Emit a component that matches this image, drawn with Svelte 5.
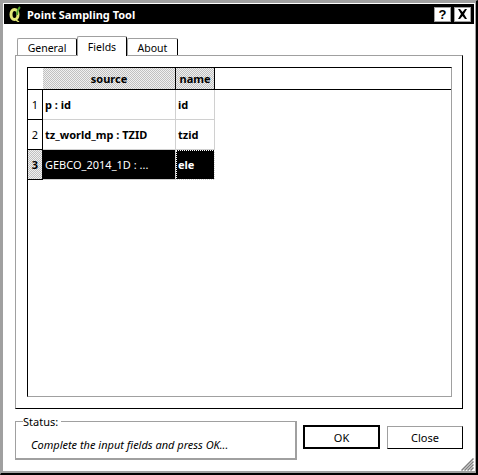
<script>
  const rows = [
    { n: '1', source: 'p : id', name: 'id' },
    { n: '2', source: 'tz_world_mp : TZID', name: 'tzid' },
    { n: '3', source: 'GEBCO_2014_1D : ...', name: 'ele', current: true }
  ];
</script>

<div class="window">
  <div class="titlebar">
    <svg class="logo" width="14" height="16" viewBox="0 0 14 16">
      <ellipse cx="5.500" cy="8.500" rx="3.500" ry="5" fill="none" stroke="#e4e878" stroke-width="3"/>
      <path d="M7 14l3 2" stroke="#e4e878" stroke-width="1.500"/>
      <path d="M8 9C8 5 9 3 11 1" stroke="#50a030" stroke-width="1.800" fill="none"/>
    </svg>
    <span class="title">Point Sampling Tool</span>
    <span class="tb-btn">?</span>
    <span class="tb-btn close">
      <svg width="11" height="10" viewBox="0 0 11 10"><path d="M1 0h2l2.500 3 2.500-3h2L7 5l3 5H8L5.500 7 3 10H1l3-5z" fill="#000"/></svg>
    </span>
  </div>
  <div class="body">
    <div class="tabs">
      <div class="tab general">General</div>
      <div class="tab active fields">Fields</div>
      <div class="tab about">About</div>
    </div>
    <div class="pane">
      <div class="table">
        <div class="row head">
          <div class="corner"></div>
          <div class="hcell source">source</div>
          <div class="hcell name">name</div>
        </div>
        {#each rows as r}
          <div class="row" class:current={r.current}>
            <div class="rowhead">{r.n}</div>
            <div class="cell source">{r.source}</div>
            <div class="cell name">{r.name}</div>
          </div>
        {/each}
      </div>
    </div>
    <div class="footer">
      <fieldset class="status">
        <legend>Status:</legend>
        <div class="msg">Complete the input fields and press OK...</div>
      </fieldset>
      <button class="btn ok">OK</button>
      <button class="btn">Close</button>
    </div>
  </div>
  <svg class="grip" width="13" height="13" viewBox="0 0 13 13">
    <path d="M12.500 .5L.5 12.500M12.500 3.500L3.500 12.500M12.500 6.500L6.500 12.500M12.500 9.500L9.500 12.500" stroke="#808080" stroke-width="1.500"/>
  </svg>
</div>

<style>
  :global(body) { margin: 0; background: #fff; }
  .window {
    position: relative;
    box-sizing: border-box;
    width: 478px;
    height: 475px;
    background: #fff;
    border-style: solid;
    border-width: 1px 2px 2px 1px;
    border-color: #a0a0a0 #000 #000 #a0a0a0;
    box-shadow: inset 2px 2px 0 #a0a0a0, inset -1px -2px 0 #a0a0a0;
    padding: 3px 2px 0 3px;
    font: 11px "Noto Sans", sans-serif;
    color: #000;
  }
  .titlebar {
    display: flex;
    align-items: center;
    height: 20px;
    background: #000;
    color: #fff;
    padding: 0 3px 0 5px;
    gap: 3px;
  }
  .logo { flex: none; }
  .title { flex: 1; font-weight: 700; font-size: 11px; margin-left: 1px; }
  .tb-btn {
    display: flex;
    align-items: center;
    justify-content: center;
    box-sizing: border-box;
    width: 17px;
    height: 15px;
    background: #fff;
    border: 1px solid #a0a0a0;
    font: 700 13px "Liberation Sans", sans-serif;
    color: #000;
  }
  .body { padding: 14px 11px 0 11px; }
  .tabs { display: flex; height: 17px; padding-left: 2px; font-size: 10.5px; }
  .tab {
    box-sizing: border-box;
    height: 17px;
    padding: 2px 0 0;
    border: 1px solid #a0a0a0;
    border-bottom: none;
    border-right: 1px solid #000;
    border-radius: 2px 2px 0 0;
    line-height: 14px;
    text-align: center;
  }
  .general { width: 60px; }
  .fields { width: 50px; }
  .about { width: 51px; }
  .tab.active {
    height: 20px;
    margin-top: -2px;
    padding-top: 3px;
    position: relative;
    z-index: 1;
    background: #fff;
  }
  .pane {
    box-sizing: border-box;
    height: 354px;
    border: 1px solid #a0a0a0;
    border-right-color: #000;
    border-bottom-color: #000;
    padding: 11px 10px 11px 11px;
  }
  .table {
    box-sizing: border-box;
    height: 100%;
    border: 1px solid #a0a0a0;
    border-top-color: #000;
    border-left-color: #000;
  }
  .row { display: flex; height: 30px; }
  .row.head { height: 21px; border-bottom: 1px solid #000; }
  .corner { width: 15px; }
  .hcell {
    display: flex;
    align-items: center;
    justify-content: center;
    box-sizing: border-box;
    font-weight: 700;
    border-right: 1px solid #000;
    background: repeating-conic-gradient(#c0c0c0 0 25%, #f0f0f0 0 50%) 0 0 / 2px 2px;
  }
  .source { width: 133px; flex: none; box-sizing: border-box; }
  .name { width: 39px; flex: none; box-sizing: border-box; }
  .rowhead {
    box-sizing: border-box;
    width: 15px;
    display: flex;
    align-items: center;
    justify-content: center;
    border-right: 1px solid #000;
    border-bottom: 1px solid #000;
  }
  .cell {
    display: flex;
    align-items: center;
    padding-left: 2px;
    border-right: 1px solid #d0d0d0;
    border-bottom: 1px solid #d0d0d0;
    font-weight: 700;
  }
  .current .rowhead {
    font-weight: 700;
    background: repeating-conic-gradient(#c0c0c0 0 25%, #f0f0f0 0 50%) 0 0 / 2px 2px;
  }
  .current .cell { background: #000; color: #fff; }
  .current .cell.source { font-weight: 400; }
  .current .cell.name { outline: 1px dotted #fff; outline-offset: -1px; }
  .footer { display: flex; align-items: flex-start; margin-top: 6px; }
  .status {
    box-sizing: border-box;
    width: 282px;
    height: 45px;
    margin: 0;
    padding: 0 0 0 15px;
    border: 1px solid #a0a0a0;
    border-bottom-width: 2px;
    border-right-width: 2px;
    min-width: 0;
  }
  .status legend { padding: 0 3px 0 0; margin-left: -8px; line-height: 13px; }
  .msg { font-style: italic; margin-top: 9px; }
  .btn {
    box-sizing: border-box;
    width: 76px;
    height: 23px;
    margin: 11px 0 0 7px;
    background: #fff;
    border: 1px solid #a0a0a0;
    border-right-color: #000;
    border-bottom-color: #000;
    font: inherit;
    padding: 0;
    color: #000;
  }
  .btn.ok { border: 2px solid #000; margin-left: 6px; width: 77px; height: 24px; margin-top: 10px; }
  .grip { position: absolute; right: 2px; bottom: 2px; }
</style>
